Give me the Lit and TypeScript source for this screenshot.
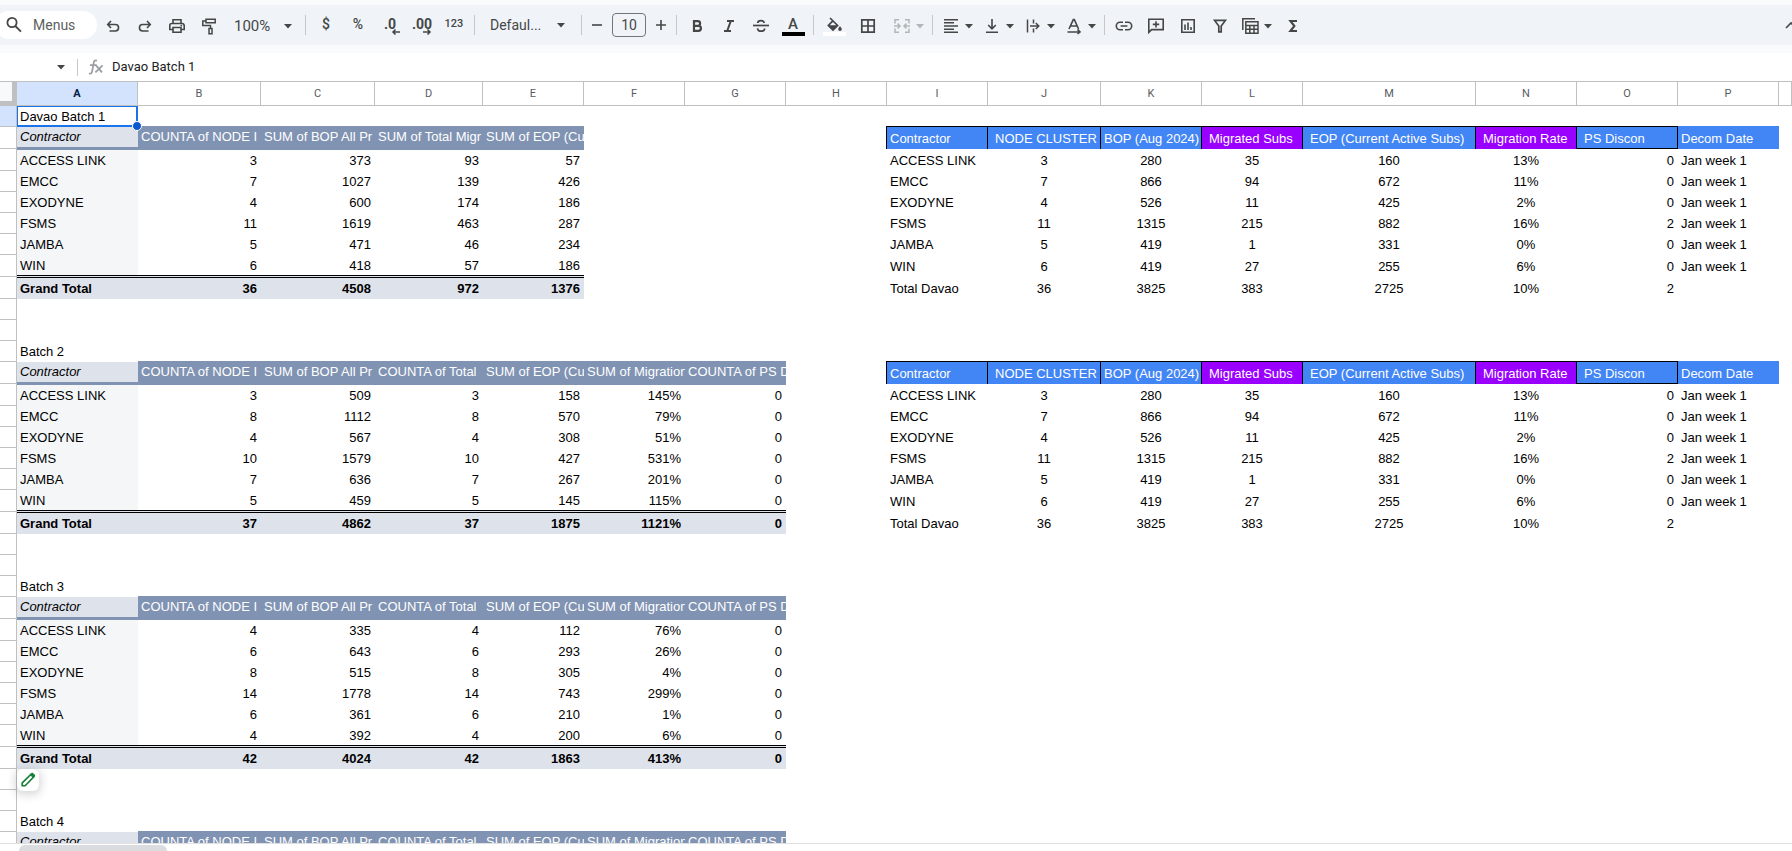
import { LitElement, html, svg, css, nothing, TemplateResult } from "lit";
import { customElement, property } from "lit/decorators.js";
import { classMap } from "lit/directives/class-map.js";

const ICONS: Record<string, TemplateResult> = {
  search: svg`<g fill="none" stroke="currentColor" stroke-width="1.8"><circle cx="8" cy="7.5" r="4.6"/><path d="M11.3 11L17 16.7"/></g>`,
  undo: svg`<path fill="none" stroke="currentColor" stroke-width="1.6" d="M8 5L4.7 8.5L8 12M5 8.5H12.3A3.2 3.2 0 0 1 12.3 15H6.5"/>`,
  redo: svg`<path fill="none" stroke="currentColor" stroke-width="1.6" d="M12 5L15.3 8.5L12 12M15 8.5H7.7A3.2 3.2 0 0 0 7.7 15H13.5"/>`,
  print: svg`<g fill="none" stroke="currentColor" stroke-width="1.6"><path d="M6 7V3.8H14V7"/><path d="M6 13.5H2.8V9.5A2 2 0 0 1 4.8 7.5H15.2A2 2 0 0 1 17.2 9.5V13.5H14"/><path d="M6 11.5H14V16.2H6Z"/></g><circle cx="14.3" cy="9.6" r=".9" fill="currentColor"/>`,
  paint: svg`<g fill="none" stroke="currentColor" stroke-width="1.5"><path d="M7 3.2H16.2V6.8H7Z"/><path d="M7 5H3.8V9.5H11.5V12.5"/><path d="M10 12.5H13V17.8H10Z"/></g>`,
  minus: svg`<path stroke="currentColor" stroke-width="1.6" d="M5 9H15"/>`,
  plus: svg`<path stroke="currentColor" stroke-width="1.6" d="M5 9H15M10 4V14"/>`,
  bold: svg`<path fill="none" stroke="currentColor" stroke-width="2.2" d="M7 5.2H10.8A2.3 2.3 0 0 1 10.8 9.8H7ZM7 9.8H11.4A2.5 2.5 0 0 1 11.4 14.9H7Z"/>`,
  italic: svg`<path fill="none" stroke="currentColor" stroke-width="2" d="M8 5H15M5 15H12M11.8 5L8.2 15"/>`,
  strike: svg`<g fill="none" stroke="currentColor" stroke-width="1.7"><path d="M2 9.5H18"/><path d="M13.3 7C13 5.3 11.7 4.6 10 4.6C8 4.6 6.8 5.5 6.8 7M6.5 12.3C6.8 14.3 8.2 15.2 10 15.2C12.2 15.2 13.6 14.1 13.6 12.4"/></g>`,
  fill: svg`<path fill="none" stroke="currentColor" stroke-width="1.7" d="M6 0L13.6 7.4L9 12L4.4 7.4L8.6 3.2"/><path fill="currentColor" d="M4.4 7.2H13.8L9 12ZM16 8.2C16 8.2 14.2 10 14.2 11.2A1.8 1.8 0 0 0 17.8 11.2C17.8 10 16 8.2 16 8.2Z"/>`,
  borders: svg`<path fill="none" stroke="currentColor" stroke-width="1.7" d="M3.8 3.8H16.2V16.2H3.8ZM10 3.8V16.2M3.8 10H16.2"/>`,
  merge: svg`<path fill="none" stroke="currentColor" stroke-width="1.5" d="M7 3.8H3V7.5M13 3.8H17V7.5M7 16.2H3V12.5M13 16.2H17V12.5M2 10H7.6M5.6 7.6L8 10L5.6 12.4M18 10H12.4M14.4 7.6L12 10L14.4 12.4"/>`,
  align: svg`<path stroke="currentColor" stroke-width="1.4" d="M3 3.7H17M3 6.8H13M3 10H17M3 13.2H13M3 16.3H17"/>`,
  valign: svg`<path fill="none" stroke="currentColor" stroke-width="1.6" d="M4 16.2H16M10 3V12.5M6.2 9L10 12.8L13.8 9"/>`,
  wrap: svg`<path fill="none" stroke="currentColor" stroke-width="1.5" d="M4.5 3.5V16.5M10.5 3.5V7.5M10.5 12.5V16.5M7 10H15.5M12.8 7L15.8 10L12.8 13"/>`,
  rotate: svg`<path fill="none" stroke="currentColor" stroke-width="1.6" d="M5 13L9.3 3.6H10.3L14.6 13M6.6 10H13M3.5 16H15.5M13.5 13.4L16 16L13.5 18"/>`,
  link: svg`<path fill="none" stroke="currentColor" stroke-width="1.6" d="M9 6.3H6A3.7 3.7 0 0 0 6 13.7H9M11 6.3H14A3.7 3.7 0 0 1 14 13.7H11M6.6 10H13.4"/>`,
  comment: svg`<path fill="none" stroke="currentColor" stroke-width="1.6" d="M2.8 16.4V3.2H17.2V13.6H5.6ZM10 5.2V11.6M6.8 8.4H13.2"/>`,
  chart: svg`<path fill="none" stroke="currentColor" stroke-width="1.6" d="M3.8 3.8H16.2V16.2H3.8ZM7 8.5V14M10 6.5V14M13 11V14"/>`,
  filter: svg`<path fill="none" stroke="currentColor" stroke-width="1.7" d="M4.6 4.4H15.4L11.2 10V15.8H8.8V10Z"/>`,
  views: svg`<g fill="none" stroke="currentColor" stroke-width="1.5"><path d="M2.8 14V2.8H15"/><path d="M5.8 5.8H18V17.2H5.8ZM5.8 9.5H18M5.8 13.3H18M9.8 9.5V17.2M14 9.5V17.2"/></g>`,
  sigma: svg`<path fill="none" stroke="currentColor" stroke-width="2.1" d="M14 5H7.4L11.4 10L7.4 15H14"/>`,
  chevron: svg`<path fill="none" stroke="currentColor" stroke-width="1.6" d="M5 12L10 7L15 12"/>`,
  caret: svg`<path fill="currentColor" d="M6 8H14L10 12.4Z"/>`,
  fx: svg`<path fill="none" stroke="currentColor" stroke-width="1.7" d="M11 3.6C8.8 2.8 8 4 7.7 5.8L6.2 14C5.8 16.4 4.8 17 3 16.4M4 8.2H10.6M10 8.4L16 15.4M16.6 8.4L9.4 15.4"/>`,
  pencil: svg`<path fill="none" stroke="#188038" stroke-width="1.9" d="M3.6 16.4V13.2L13.2 3.8L16.2 6.8L6.8 16.4Z"/><path fill="#188038" d="M12 4L14 2.2C14.6 1.8 15.2 1.8 15.8 2.4L17.6 4.2C18.1 4.8 18.1 5.4 17.6 6L15.8 7.8Z"/>`,
};

const icon = (name: string) =>
  html`<svg class="icon" width="20" height="20" viewBox="0 0 20 20" aria-hidden="true">${ICONS[name]}</svg>`;

interface Cell {
  text?: string;
  cls?: string;
  selected?: boolean;
  pencil?: boolean;
}
interface Row {
  tall?: boolean;
  active?: boolean;
  cells: Record<string, Cell>;
}

const COLUMNS: [string, number][] = [
  ["A", 121], ["B", 123], ["C", 114], ["D", 108], ["E", 101], ["F", 101], ["G", 101], ["H", 101],
  ["I", 101], ["J", 113], ["K", 101], ["L", 101], ["M", 173], ["N", 101], ["O", 101], ["P", 101],
];
const NAMES = ["ACCESS LINK", "EMCC", "EXODYNE", "FSMS", "JAMBA", "WIN"];

const HEADS_FIRST = ["COUNTA of NODE I", "SUM of BOP All Pr", "SUM of Total Migr", "SUM of EOP (Cu"];
const HEADS = ["COUNTA of NODE I", "SUM of BOP All Pr", "COUNTA of Total", "SUM of EOP (Cu", "SUM of Migration", "COUNTA of PS D"];

interface Batch {
  title: string;
  heads: string[];
  rows: string[][];
  total: string[];
  summary: boolean;
}

const BATCHES: Batch[] = [
  {
    title: "Davao Batch 1", heads: HEADS_FIRST, summary: true,
    rows: [["3", "373", "93", "57"], ["7", "1027", "139", "426"], ["4", "600", "174", "186"], ["11", "1619", "463", "287"], ["5", "471", "46", "234"], ["6", "418", "57", "186"]],
    total: ["36", "4508", "972", "1376"],
  },
  {
    title: "Batch 2", heads: HEADS, summary: true,
    rows: [["3", "509", "3", "158", "145%", "0"], ["8", "1112", "8", "570", "79%", "0"], ["4", "567", "4", "308", "51%", "0"], ["10", "1579", "10", "427", "531%", "0"], ["7", "636", "7", "267", "201%", "0"], ["5", "459", "5", "145", "115%", "0"]],
    total: ["37", "4862", "37", "1875", "1121%", "0"],
  },
  {
    title: "Batch 3", heads: HEADS, summary: false,
    rows: [["4", "335", "4", "112", "76%", "0"], ["6", "643", "6", "293", "26%", "0"], ["8", "515", "8", "305", "4%", "0"], ["14", "1778", "14", "743", "299%", "0"], ["6", "361", "6", "210", "1%", "0"], ["4", "392", "4", "200", "6%", "0"]],
    total: ["42", "4024", "42", "1863", "413%", "0"],
  },
  { title: "Batch 4", heads: HEADS, summary: false, rows: [], total: [] },
];

const SUMMARY_HEADS: [string, string, string][] = [
  ["I", "Contractor", "blue first"], ["J", "NODE CLUSTER", "blue inset"], ["K", "BOP (Aug 2024)", "blue"],
  ["L", "Migrated Subs", "purple inset"], ["M", "EOP (Current Active Subs)", "blue inset"],
  ["N", "Migration Rate", "purple inset"], ["O", "PS Discon", "blue inset under"], ["P", "Decom Date", "blue open"],
];
const SUMMARY_ROWS = [
  ["ACCESS LINK", "3", "280", "35", "160", "13%", "0", "Jan week 1"],
  ["EMCC", "7", "866", "94", "672", "11%", "0", "Jan week 1"],
  ["EXODYNE", "4", "526", "11", "425", "2%", "0", "Jan week 1"],
  ["FSMS", "11", "1315", "215", "882", "16%", "2", "Jan week 1"],
  ["JAMBA", "5", "419", "1", "331", "0%", "0", "Jan week 1"],
  ["WIN", "6", "419", "27", "255", "6%", "0", "Jan week 1"],
  ["Total Davao", "36", "3825", "383", "2725", "10%", "2", ""],
];

function summaryCells(index: number): Record<string, Cell> {
  const out: Record<string, Cell> = {};
  SUMMARY_ROWS[index].forEach((text, i) => {
    const cls = i === 0 || i === 7 ? "" : i === 6 ? "num" : "mid";
    out["IJKLMNOP"[i]] = { text, cls };
  });
  return out;
}

function batchRows(batch: Batch, index: number): Row[] {
  const rows: Row[] = [{ active: index === 0, cells: { A: { text: batch.title, selected: index === 0 } } }];
  const head: Record<string, Cell> = { A: { text: "Contractor", cls: "corner-label" } };
  batch.heads.forEach((text, i) => (head["BCDEFG"[i]] = { text, cls: "pivot-head" }));
  if (batch.summary) SUMMARY_HEADS.forEach(([col, text, cls]) => (head[col] = { text, cls: `sum-head ${cls}` }));
  rows.push({ tall: true, cells: head });
  if (!batch.rows.length) return rows;

  batch.rows.forEach((values, r) => {
    const first = r === 0;
    const last = r === batch.rows.length - 1;
    const edge = first ? " under-head" : last ? " over-total" : "";
    const cells: Record<string, Cell> = { A: { text: NAMES[r], cls: "label" + edge } };
    values.forEach((text, i) => (cells["BCDEFG"[i]] = { text, cls: "num" + edge }));
    if (batch.summary) Object.assign(cells, summaryCells(r));
    rows.push({ tall: first || last, cells });
  });

  const total: Record<string, Cell> = { A: { text: "Grand Total", cls: "total" } };
  batch.total.forEach((text, i) => (total["BCDEFG"[i]] = { text, cls: "num total" }));
  if (batch.summary) Object.assign(total, summaryCells(6));
  rows.push({ tall: true, cells: total });
  rows.push({ cells: { A: { pencil: index === 2 } } }, { cells: {} });
  return rows;
}

const ROWS = BATCHES.flatMap(batchRows);

const shared = css`
  :host, * { box-sizing: border-box; }
  button, input, select {
    font: inherit; color: inherit; background: none; border: 0; padding: 0; margin: 0;
    border-radius: 0; outline: none; appearance: none;
  }
  .icon { display: block; flex: none; }
`;

@customElement("sheet-toolbar")
export class SheetToolbar extends LitElement {
  static styles = [shared, css`
    :host {
      display: flex; align-items: center; height: 40px; padding-top: 2px; overflow: hidden;
      background: #f0f4f9; color: #444746; font: 14px/20px Roboto, "Noto Sans", sans-serif;
    }
    .menus {
      display: flex; align-items: center; gap: 9px; flex: none; width: 102px; height: 28px;
      margin: 0 0 2px -5px; padding-left: 9px; background: #fff; border-radius: 14px;
    }
    .menus input { width: 60px; }
    .menus input::placeholder { color: #5c5f5e; opacity: 1; }
    .tool { display: flex; align-items: center; justify-content: center; flex: none; width: 32px; height: 28px; }
    .menu { width: 41px; padding-left: 4px; justify-content: flex-start; }
    .menu .icon + .icon { margin-left: -2px; }
    .wide { width: 36px; }
    .step { width: 22px; }
    .muted { width: 42px; padding-left: 6px; color: #b3b6b8; }
    .sep { flex: none; width: 1px; height: 20px; margin: 0 4px 2px; background: #c7c7c7; }
    .near { margin: 0 3px 2px; }
    .pick { display: grid; flex: none; align-items: center; }
    .pick select, .pick .icon { grid-area: 1 / 1; }
    .pick .icon { justify-self: end; pointer-events: none; }
    .zoom { width: 76px; padding: 0 3px 0 9px; font-size: 15px; }
    .font { width: 98px; padding: 0 6px 2px 11px; }
    .size {
      flex: none; width: 34px; height: 24px; margin: 0 4px 2px; text-align: center;
      border: 1px solid #747775; border-radius: 4px;
    }
    .glyph { font-weight: 500; padding-bottom: 4px; }
    .digits { font-size: 11px; }
    .decimal { flex-direction: column; font-weight: 700; line-height: 12px; }
    .decimal svg { display: block; margin: -1px 0 0 12px; }
    .stack { flex-direction: column; }
    .letter { font-size: 15px; line-height: 16px; font-weight: 500; }
    .bar { width: 23px; height: 4px; background: #000; }
    .white { background: #fff; }
    .fold { margin: 0 -15px 0 auto; }
  `];

  private tool(name: string, label: string, cls = "") {
    return html`<button class="tool ${cls}" aria-label=${label}>${icon(name)}</button>`;
  }
  private menu(name: string, label: string, cls = "") {
    return html`<button class="tool menu ${cls}" aria-label=${label}>${icon(name)}${icon("caret")}</button>`;
  }
  private decimal(text: string, label: string, path: string) {
    return html`<button class="tool decimal" aria-label=${label}>
      <span>${text}</span>
      <svg width="10" height="6" viewBox="0 0 10 6" aria-hidden="true"><path fill="none" stroke="currentColor" stroke-width="1.5" d=${path}/></svg>
    </button>`;
  }

  render() {
    const sep = html`<span class="sep"></span>`;
    return html`
      <label class="menus">${icon("search")}<input placeholder="Menus" aria-label="Menus" /></label>
      ${this.tool("undo", "Undo")}${this.tool("redo", "Redo")}${this.tool("print", "Print")}${this.tool("paint", "Paint format")}
      <label class="pick zoom"><select aria-label="Zoom"><option>100%</option></select>${icon("caret")}</label>
      ${sep}
      <button class="tool glyph" aria-label="Format as currency">$</button>
      <button class="tool glyph" aria-label="Format as percent">%</button>
      ${this.decimal(".0", "Decrease decimal places", "M9 3H2M4.5 .5L2 3L4.5 5.5")}
      ${this.decimal(".00", "Increase decimal places", "M0 3H7M4.5 .5L7 3L4.5 5.5")}
      <button class="tool glyph digits" aria-label="More formats">123</button>
      ${sep}
      <label class="pick font"><select aria-label="Font"><option>Defaul...</option></select>${icon("caret")}</label>
      ${sep}
      ${this.tool("minus", "Decrease font size", "step")}
      <input class="size" aria-label="Font size" .value=${"10"} />
      ${this.tool("plus", "Increase font size", "step")}
      ${sep}
      ${this.tool("bold", "Bold")}${this.tool("italic", "Italic")}${this.tool("strike", "Strikethrough")}
      <button class="tool stack" aria-label="Text color"><span class="letter">A</span><span class="bar"></span></button>
      ${sep}
      <button class="tool stack" aria-label="Fill color">
        <svg class="icon" width="20" height="16" viewBox="0 -2 20 16" aria-hidden="true">${ICONS.fill}</svg><span class="bar white"></span>
      </button>
      ${this.tool("borders", "Borders", "wide")}${this.menu("merge", "Merge cells", "muted")}
      ${sep}
      ${this.menu("align", "Horizontal align")}${this.menu("valign", "Vertical align")}
      ${this.menu("wrap", "Text wrapping")}${this.menu("rotate", "Text rotation")}
      <span class="sep near"></span>
      ${this.tool("link", "Insert link")}${this.tool("comment", "Insert comment")}
      ${this.tool("chart", "Insert chart")}${this.tool("filter", "Create a filter")}
      ${this.menu("views", "Table views")}${this.tool("sigma", "Functions")}
      ${this.tool("chevron", "Hide the menus", "fold")}
    `;
  }
}

@customElement("formula-bar")
export class FormulaBar extends LitElement {
  @property() value = "";

  static styles = [shared, css`
    :host {
      display: flex; align-items: center; height: 28px; background: #fff; color: #202124;
      font: 13px/20px Roboto, "Noto Sans", sans-serif;
    }
    .name { display: flex; flex: none; width: 77px; padding-right: 6px; color: #444746; }
    .name input { flex: 1; min-width: 0; }
    .sep { flex: none; width: 1px; height: 17px; background: #c7c7c7; }
    .fx { display: flex; flex: none; width: 34px; padding-left: 8px; color: #9a9da1; }
    .formula { flex: 1; min-width: 0; }
  `];

  render() {
    return html`
      <div class="name"><input aria-label="Name box" /><button aria-label="Named ranges">${icon("caret")}</button></div>
      <span class="sep"></span>
      <span class="fx">${icon("fx")}</span>
      <input class="formula" aria-label="Formula" .value=${this.value} />
    `;
  }
}

@customElement("sheet-grid")
export class SheetGrid extends LitElement {
  static styles = [shared, css`
    :host { display: block; overflow: hidden; background: #fff; border-top: 1px solid #c0c0c0; }
    table { width: 100%; table-layout: fixed; border-spacing: 0; font: 13px/15px "Liberation Sans", Arial, sans-serif; color: #000; }
    th, td { padding: 0; }
    .gutter { width: 17px; }
    .col {
      height: 24px; border-right: 1px solid #c0c0c0; border-bottom: 1px solid #c0c0c0;
      font: 11px/15px Roboto, "Noto Sans", sans-serif; color: #575b5f;
    }
    .corner { background: #f8f9fa; border-right: 5px solid #c0c0c0; border-bottom: 5px solid #c0c0c0; }
    .on { background: #d3e3fd; color: #041e49; }
    .col.on { font-weight: 700; }
    .row { height: 21px; border-right: 1px solid #c0c0c0; border-bottom: 1px solid #c0c0c0; }
    .tall .row { height: 22px; }
    td {
      padding: 0 4px 3px 3px; vertical-align: bottom; white-space: nowrap; overflow: hidden; text-align: left;
    }
    .num { text-align: right; }
    .mid { text-align: center; }
    .anchor { position: relative; overflow: visible; }
    .label { background: #f4f6f8; }
    .corner-label { background: #dee2eb; font-style: italic; border-bottom: 2px solid #8093b3; }
    .pivot-head {
      background: #8093b3; color: #fff; border-bottom: 2px solid #8093b3; box-shadow: 0 -1px 0 #8093b3;
      padding-right: 0;
    }
    .under-head { border-top: 1px solid #8093b3; }
    .over-total { border-bottom: 1px solid #dee2eb; box-shadow: inset 0 -1px 0 #000; }
    .total { background: #dee2eb; font-weight: 700; border-top: 1px solid #000; }
    .sum-head { color: #fff; border-right: 1px solid #000; box-shadow: 0 -1px 0 #000; padding-right: 0; }
    .blue { background: #4285f4; }
    .purple { background: #9900ff; }
    .inset { padding-left: 7px; }
    .first { box-shadow: 0 -1px 0 #000, -1px 0 0 #000, -1px -1px 0 #000; }
    .under { box-shadow: 0 -1px 0 #000, inset 0 -1px 0 #000; }
    .open { border-right: 0; box-shadow: 0 -1px 0 #4285f4; }
    .selection {
      position: absolute; inset: 0; z-index: 1; border: solid #1a73e8; border-width: 1px 2px 2px 1px; pointer-events: none;
    }
    .handle {
      position: absolute; right: -6px; bottom: -6px; width: 10px; height: 10px; border-radius: 50%;
      background: #0b57d0; border: 1px solid #fff;
    }
    .pencil {
      position: absolute; left: 0; top: 0; z-index: 1; display: grid; place-items: center; width: 22px; height: 22px;
      background: #fff; border-radius: 6px; box-shadow: 0 2px 8px 2px rgba(60, 64, 67, 0.2);
    }
    .pencil .icon { width: 18px; height: 18px; }
  `];

  private cell(cell?: Cell) {
    if (!cell) return html`<td></td>`;
    const anchored = cell.selected || cell.pencil;
    return html`<td class="${cell.cls ?? ""} ${anchored ? "anchor" : ""}">${cell.text ?? nothing}${
      cell.selected ? html`<div class="selection"><div class="handle"></div></div>` : nothing
    }${cell.pencil ? html`<button class="pencil" aria-label="Edit pivot table">${icon("pencil")}</button>` : nothing}</td>`;
  }

  render() {
    return html`
      <table>
        <colgroup>
          <col class="gutter" />
          ${COLUMNS.map(([, width]) => html`<col style="width:${width}px" />`)}
          <col />
        </colgroup>
        <thead>
          <tr>
            <th class="col corner"></th>
            ${COLUMNS.map(([name]) => html`<th scope="col" class=${classMap({ col: true, on: name === "A" })}>${name}</th>`)}
            <th class="col"></th>
          </tr>
        </thead>
        <tbody>
          ${ROWS.map((row) => html`<tr class=${classMap({ tall: !!row.tall })}>
            <th scope="row" class=${classMap({ row: true, on: !!row.active })}></th>
            ${COLUMNS.map(([name]) => this.cell(row.cells[name]))}
            <td></td>
          </tr>`)}
        </tbody>
      </table>
    `;
  }
}

@customElement("app-root")
export class AppRoot extends LitElement {
  static styles = css`
    :host, * { box-sizing: border-box; }
    :host { display: flex; flex-direction: column; height: 100vh; overflow: hidden; background: #f9fbfd; }
    sheet-toolbar { flex: none; margin: 5px 0 8px; }
    formula-bar { flex: none; }
    sheet-grid { flex: 1; min-height: 0; }
    .scroll { flex: none; height: 8px; overflow: hidden; padding: 1px 0 0 19px; border-top: 1px solid #e0e0e0; background: #fff; }
    .thumb { width: 148px; height: 12px; border-radius: 6px; background: #dadce0; }
  `;

  render() {
    return html`
      <sheet-toolbar></sheet-toolbar>
      <formula-bar value="Davao Batch 1"></formula-bar>
      <sheet-grid></sheet-grid>
      <div class="scroll"><div class="thumb"></div></div>
    `;
  }
}
